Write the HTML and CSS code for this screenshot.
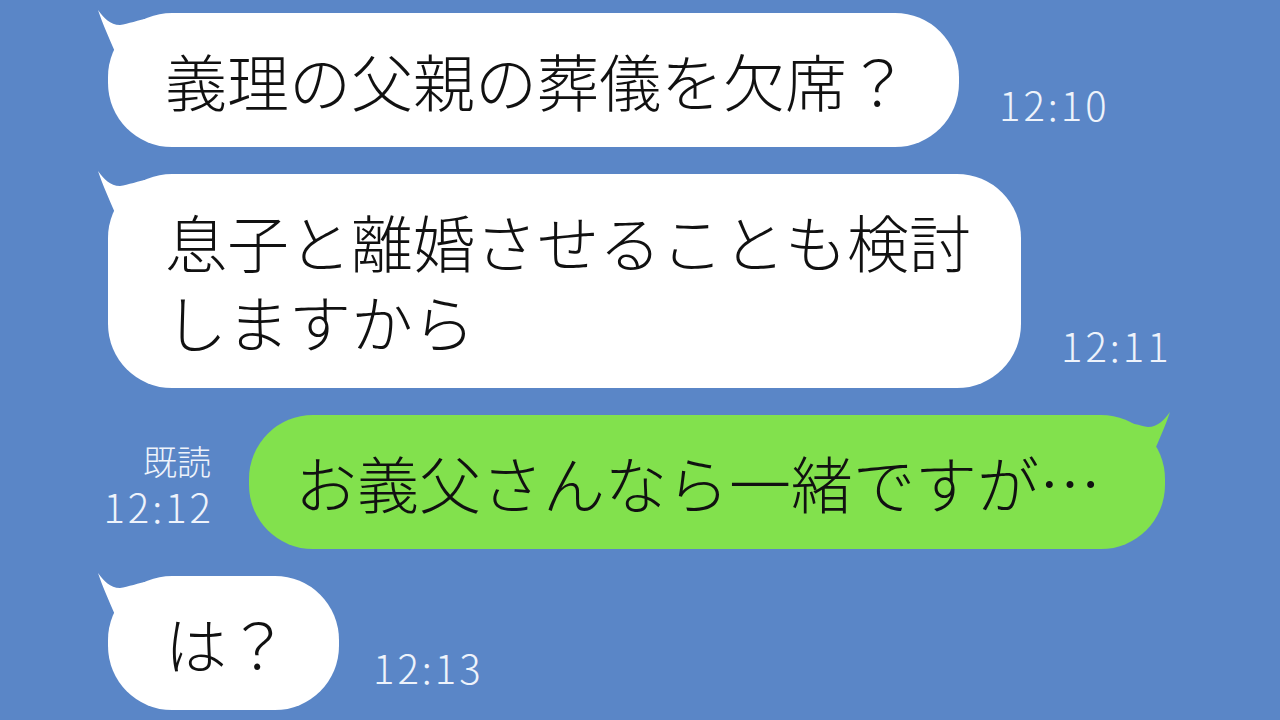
FILE: index.html
```
<!DOCTYPE html>
<html lang="ja">
<head>
  <meta charset="UTF-8">
  <meta name="viewport" content="width=device-width, initial-scale=1.0">
  <title>トーク</title>
  <link rel="stylesheet" href="styles.css">
</head>
<body>
  <main class="chat">
    <div class="row">
      <div class="bubble">
        <svg class="tail" width="60" height="50" viewBox="0 0 60 50"><path d="M2,2 C6,14 12,28 20,46 L54,46 L54,10 C42,12 32,16 24,17 C14,17 8,10 2,2 Z"/></svg>
        <p>義理の父親の葬儀を欠席？</p>
      </div>
      <div class="meta"><span class="time">12:10</span></div>
    </div>

    <div class="row">
      <div class="bubble">
        <svg class="tail" width="60" height="50" viewBox="0 0 60 50"><path d="M2,2 C6,14 12,28 20,46 L54,46 L54,10 C42,12 32,16 24,17 C14,17 8,10 2,2 Z"/></svg>
        <p>息子と離婚させることも検討<br>しますから</p>
      </div>
      <div class="meta"><span class="time">12:11</span></div>
    </div>

    <div class="row mine">
      <div class="meta"><span class="read">既読</span><span class="time">12:12</span></div>
      <div class="bubble">
        <svg class="tail" width="60" height="50" viewBox="0 0 60 50"><path d="M2,2 C6,14 12,28 20,46 L54,46 L54,10 C42,12 32,16 24,17 C14,17 8,10 2,2 Z"/></svg>
        <p>お義父さんなら一緒ですが…</p>
      </div>
    </div>

    <div class="row short">
      <div class="bubble">
        <svg class="tail" width="60" height="50" viewBox="0 0 60 50"><path d="M2,2 C6,14 12,28 20,46 L54,46 L54,10 C42,12 32,16 24,17 C14,17 8,10 2,2 Z"/></svg>
        <p>は？</p>
      </div>
      <div class="meta"><span class="time">12:13</span></div>
    </div>
  </main>
</body>
</html>
```

FILE: styles.css
```
/* トーク画面 */
body {
  margin: 0;
  background: #5a86c7;
  font-family: "Noto Sans CJK JP", "Noto Sans", sans-serif;
  overflow: hidden;
}

.chat {
  display: flex;
  flex-direction: column;
  gap: 27px;
  padding: 13px 115px 0 108px;
  height: 720px;
  box-sizing: border-box;
}

.row {
  display: flex;
  align-items: flex-end;
  gap: 40px;
}

.row.mine {
  justify-content: flex-end;
  gap: 38px;
}

.row.short {
  gap: 34px;
}

.bubble {
  position: relative;
  background: #fff;
  border-radius: 64px;
  padding: 27px 50px 27px 57px;
}

.bubble p {
  position: relative;
  margin: 0;
  font-size: 62px;
  font-weight: 300;
  line-height: 80px;
  color: #111;
  white-space: nowrap;
}

.tail {
  position: absolute;
  left: -12px;
  top: -5px;
  fill: #fff;
}

.mine .bubble {
  background: #82e14d;
  padding: 27px 64px 27px 46px;
}

.mine .tail {
  left: auto;
  right: -7px;
  top: -5px;
  fill: #82e14d;
  transform: scaleX(-1);
}

.meta {
  display: flex;
  flex-direction: column;
  align-items: flex-end;
  color: #eef3fb;
  font-weight: 300;
  padding-bottom: 20px;
}

.time {
  font-size: 40px;
  line-height: 46px;
  letter-spacing: 3px;
  margin-right: -3px;
}

.read {
  font-size: 34px;
  line-height: 44px;
}
```
